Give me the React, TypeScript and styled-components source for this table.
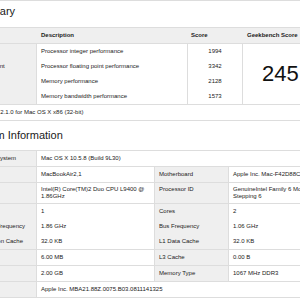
import React from "react";
import styled, { createGlobalStyle, css } from "styled-components";

const Global = createGlobalStyle`
  html, body {
    margin: 0;
    padding: 0;
    background: #ffffff;
    overflow: hidden;
  }
  body {
    font-family: "Liberation Sans", Arial, Helvetica, sans-serif;
    color: #222222;
  }
`;

const Page = styled.div`
  width: 400px;
  margin-left: -36px;
  border-top: 1px solid #dddddd;
`;

const Heading = styled.h2<{ $first?: boolean }>`
  margin: 0;
  padding: ${(p) => (p.$first ? "4px 0 9px 4px" : "8px 0 8px 4px")};
  font-size: 11px;
  line-height: 13px;
  font-weight: normal;
  color: #1a1a1a;
  white-space: nowrap;
`;

const Table = styled.table<{ $width: number }>`
  border-collapse: separate;
  border-spacing: 0;
  table-layout: fixed;
  width: ${(p) => p.$width}px;
  border-top: 1px solid #dddddd;
  font-size: 6px;
  line-height: 7px;
`;

const ruled = css`
  border-bottom: 1px solid #dddddd;
`;

const HeadCell = styled.th`
  text-align: left;
  font-weight: bold;
  background: #efefef;
  padding: 4px;
  white-space: nowrap;
  overflow: hidden;
  ${ruled}
`;

const LabelCell = styled.td<{ $ruled?: boolean; $tight?: boolean }>`
  background: #efefef;
  border-right: 1px solid #dddddd;
  padding: ${(p) => (p.$tight ? "3px 4px" : "4px")};
  white-space: nowrap;
  vertical-align: top;
  ${(p) => p.$ruled && ruled}
`;

const ValueCell = styled.td<{ $ruled?: boolean; $tight?: boolean; $divided?: boolean }>`
  padding: ${(p) => (p.$tight ? "3px 4px" : "4px")};
  vertical-align: top;
  ${(p) => p.$divided && "border-right: 1px solid #dddddd;"}
  ${(p) => p.$ruled && ruled}
`;

const ScoreCell = styled.td<{ $ruled?: boolean }>`
  padding: 4px;
  text-align: center;
  border-left: 1px solid #dddddd;
  border-right: 1px solid #dddddd;
  ${(p) => p.$ruled && ruled}
`;

const TotalCell = styled.td`
  padding: 0 0 0 19px;
  vertical-align: middle;
  font-size: 22px;
  line-height: 24px;
  color: #111111;
  white-space: nowrap;
  ${ruled}
`;

const FooterCell = styled.td`
  padding: 4px;
  white-space: nowrap;
  ${ruled}
`;

const summaryRows = [
  { section: "Integer", description: "Processor integer performance", score: "1994" },
  { section: "Floating Point", description: "Processor floating point performance", score: "3342" },
  { section: "Memory", description: "Memory performance", score: "2128" },
  { section: "Stream", description: "Memory bandwidth performance", score: "1573" },
];

type SysRow = {
  label: string;
  value: string;
  label2?: string;
  value2?: string;
  ruled?: boolean;
  tight?: boolean;
};

const systemRows: SysRow[] = [
  { label: "Operating System", value: "Mac OS X 10.5.8 (Build 9L30)", ruled: true },
  { label: "Model", value: "MacBookAir2,1", label2: "Motherboard", value2: "Apple Inc. Mac-F42D88C8", ruled: true },
  {
    label: "Processor",
    value: "Intel(R) Core(TM)2 Duo CPU L9400 @ 1.86GHz",
    label2: "Processor ID",
    value2: "GenuineIntel Family 6 Model 23 Stepping 6",
    ruled: true,
    tight: true,
  },
  { label: "Processors", value: "1", label2: "Cores", value2: "2" },
  { label: "Processor Frequency", value: "1.86 GHz", label2: "Bus Frequency", value2: "1.06 GHz" },
  { label: "L1 Instruction Cache", value: "32.0 KB", label2: "L1 Data Cache", value2: "32.0 KB", ruled: true },
  { label: "L2 Cache", value: "6.00 MB", label2: "L3 Cache", value2: "0.00 B", ruled: true },
  { label: "Memory", value: "2.00 GB", label2: "Memory Type", value2: "1067 MHz DDR3", ruled: true },
  { label: "BIOS", value: "Apple Inc. MBA21.88Z.0075.B03.0811141325", ruled: true },
];

export default function App() {
  return (
    <>
      <Global />
      <Page>
        <Heading $first>Summary</Heading>
        <Table $width={400}>
          <colgroup>
            <col style={{ width: 73 }} />
            <col style={{ width: 150 }} />
            <col style={{ width: 56 }} />
            <col style={{ width: 121 }} />
          </colgroup>
          <thead>
            <tr>
              <HeadCell>Section</HeadCell>
              <HeadCell>Description</HeadCell>
              <HeadCell>Score</HeadCell>
              <HeadCell>Geekbench Score</HeadCell>
            </tr>
          </thead>
          <tbody>
            {summaryRows.map((r, i) => {
              const last = i === summaryRows.length - 1;
              return (
                <tr key={r.section}>
                  <LabelCell $ruled={last}>{r.section}</LabelCell>
                  <ValueCell $ruled={last}>{r.description}</ValueCell>
                  <ScoreCell $ruled={last}>{r.score}</ScoreCell>
                  {i === 0 && <TotalCell rowSpan={4}>245</TotalCell>}
                </tr>
              );
            })}
            <tr>
              <FooterCell colSpan={4}>Geekbench 2.1.0 for Mac OS X x86 (32-bit)</FooterCell>
            </tr>
          </tbody>
        </Table>

        <Heading>System Information</Heading>
        <Table $width={373}>
          <colgroup>
            <col style={{ width: 73 }} />
            <col style={{ width: 118 }} />
            <col style={{ width: 74 }} />
            <col style={{ width: 108 }} />
          </colgroup>
          <tbody>
            {systemRows.map((r) => (
              <tr key={r.label}>
                <LabelCell $ruled={r.ruled} $tight={r.tight}>
                  {r.label}
                </LabelCell>
                {r.label2 ? (
                  <>
                    <ValueCell $ruled={r.ruled} $tight={r.tight} $divided>
                      {r.value}
                    </ValueCell>
                    <LabelCell $ruled={r.ruled} $tight={r.tight}>
                      {r.label2}
                    </LabelCell>
                    <ValueCell $ruled={r.ruled} $tight={r.tight}>
                      {r.value2}
                    </ValueCell>
                  </>
                ) : (
                  <ValueCell colSpan={3} $ruled={r.ruled}>
                    {r.value}
                  </ValueCell>
                )}
              </tr>
            ))}
          </tbody>
        </Table>
      </Page>
    </>
  );
}
